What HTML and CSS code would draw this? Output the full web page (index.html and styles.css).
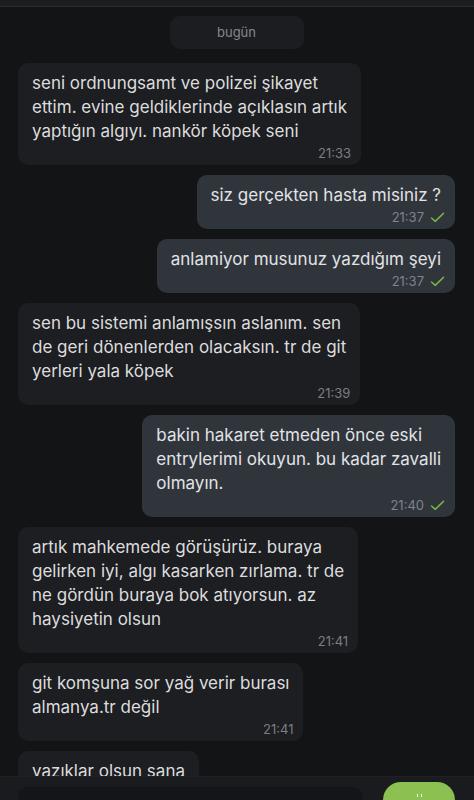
FILE: index.html
```html
<!DOCTYPE html>
<html lang="tr">
<head>
  <meta charset="UTF-8">
  <meta name="viewport" content="width=device-width, initial-scale=1.0">
  <title>Sohbet</title>
  <link rel="stylesheet" href="styles.css">
</head>
<body>
  <div class="app">
    <div class="topbar"></div>

    <div class="chat">
      <div class="day">bugün</div>

      <div class="msg in">
        <p>seni ordnungsamt ve polizei şikayet<br>ettim. evine geldiklerinde açıklasın artık<br>yaptığın algıyı. nankör köpek seni</p>
        <div class="meta">21:33</div>
      </div>

      <div class="msg out">
        <p>siz gerçekten hasta misiniz ?</p>
        <div class="meta">21:37 <svg class="tick" viewBox="0 0 16 12"><path d="M1.5 6.5 L5.5 10.2 L14.5 1.5"/></svg></div>
      </div>

      <div class="msg out">
        <p>anlamiyor musunuz yazdığım şeyi</p>
        <div class="meta">21:37 <svg class="tick" viewBox="0 0 16 12"><path d="M1.5 6.5 L5.5 10.2 L14.5 1.5"/></svg></div>
      </div>

      <div class="msg in">
        <p>sen bu sistemi anlamışsın aslanım. sen<br>de geri dönenlerden olacaksın. tr de git<br>yerleri yala köpek</p>
        <div class="meta">21:39</div>
      </div>

      <div class="msg out">
        <p>bakin hakaret etmeden önce eski<br>entrylerimi okuyun. bu kadar zavalli<br>olmayın.</p>
        <div class="meta">21:40 <svg class="tick" viewBox="0 0 16 12"><path d="M1.5 6.5 L5.5 10.2 L14.5 1.5"/></svg></div>
      </div>

      <div class="msg in">
        <p>artık mahkemede görüşürüz. buraya<br>gelirken iyi, algı kasarken zırlama. tr de<br>ne gördün buraya bok atıyorsun. az<br>haysiyetin olsun</p>
        <div class="meta">21:41</div>
      </div>

      <div class="msg in">
        <p>git komşuna sor yağ verir burası<br>almanya.tr değil</p>
        <div class="meta">21:41</div>
      </div>

      <div class="msg in">
        <p>yazıklar olsun sana</p>
        <div class="meta">21:42</div>
      </div>
    </div>

    <div class="composer">
      <div class="input"></div>
      <div class="send"><span class="mark"></span></div>
    </div>
  </div>
</body>
</html>
```

FILE: styles.css
```css
* {
  box-sizing: border-box;
}

body {
  margin: 0;
  padding: 0;
  background-color: #131416;
  font-family: Inter, "Noto Sans", sans-serif;
  color: #dedfe1;
}

.app {
  height: 800px;
  display: flex;
  flex-direction: column;
  overflow: hidden;
}

.topbar {
  height: 7px;
  flex-shrink: 0;
  background-color: #1c1d20;
  border-bottom: 1px solid #2b2c30;
}

.chat {
  flex: 1;
  overflow: hidden;
  display: flex;
  flex-direction: column;
  gap: 10px;
  padding: 9px 19px 0 18px;
}

.day {
  align-self: center;
  width: 134px;
  height: 33px;
  margin-bottom: 4px;
  border-radius: 10px;
  background-color: #1c1d20;
  color: #87888d;
  font-size: 13px;
  line-height: 33px;
  text-align: center;
  flex-shrink: 0;
}

.msg {
  flex-shrink: 0;
  max-width: 345px;
  padding: 8px 10px 4px 14px;
  border-radius: 10px;
}

.msg p {
  margin: 0;
  padding-right: 4px;
  font-size: 17px;
  line-height: 24px;
  white-space: nowrap;
}

.msg.in {
  align-self: flex-start;
  background-color: #1d1e21;
  color: #dcdcdd;
}

.msg.out {
  align-self: flex-end;
  background-color: #30353c;
  color: #e1e3e6;
}

.meta {
  margin-top: 2px;
  height: 16px;
  display: flex;
  justify-content: flex-end;
  align-items: center;
  gap: 6px;
  font-size: 13px;
  line-height: 16px;
  color: #7c7d82;
}

.msg.out .meta {
  color: #7d848d;
}

.tick {
  width: 15px;
  height: 11px;
  fill: none;
  stroke: #7db247;
  stroke-width: 1.6;
  stroke-linecap: round;
  stroke-linejoin: round;
}

.composer {
  height: 24px;
  flex-shrink: 0;
  display: flex;
  align-items: flex-start;
  gap: 20px;
  padding: 5px 19px 0 18px;
  background-color: #1a1b1e;
  border-top: 1px solid #202124;
}

.input {
  width: 345px;
  height: 30px;
  margin-top: 5px;
  border-radius: 10px;
  background-color: #141518;
}

.send {
  flex: 1;
  height: 40px;
  border-radius: 18px;
  background-color: #8cc152;
  display: flex;
  justify-content: center;
  padding-top: 12px;
}

.mark {
  width: 5px;
  height: 3px;
  border-left: 1.5px solid #f2f7ec;
  border-right: 1.5px solid #f2f7ec;
}
```
